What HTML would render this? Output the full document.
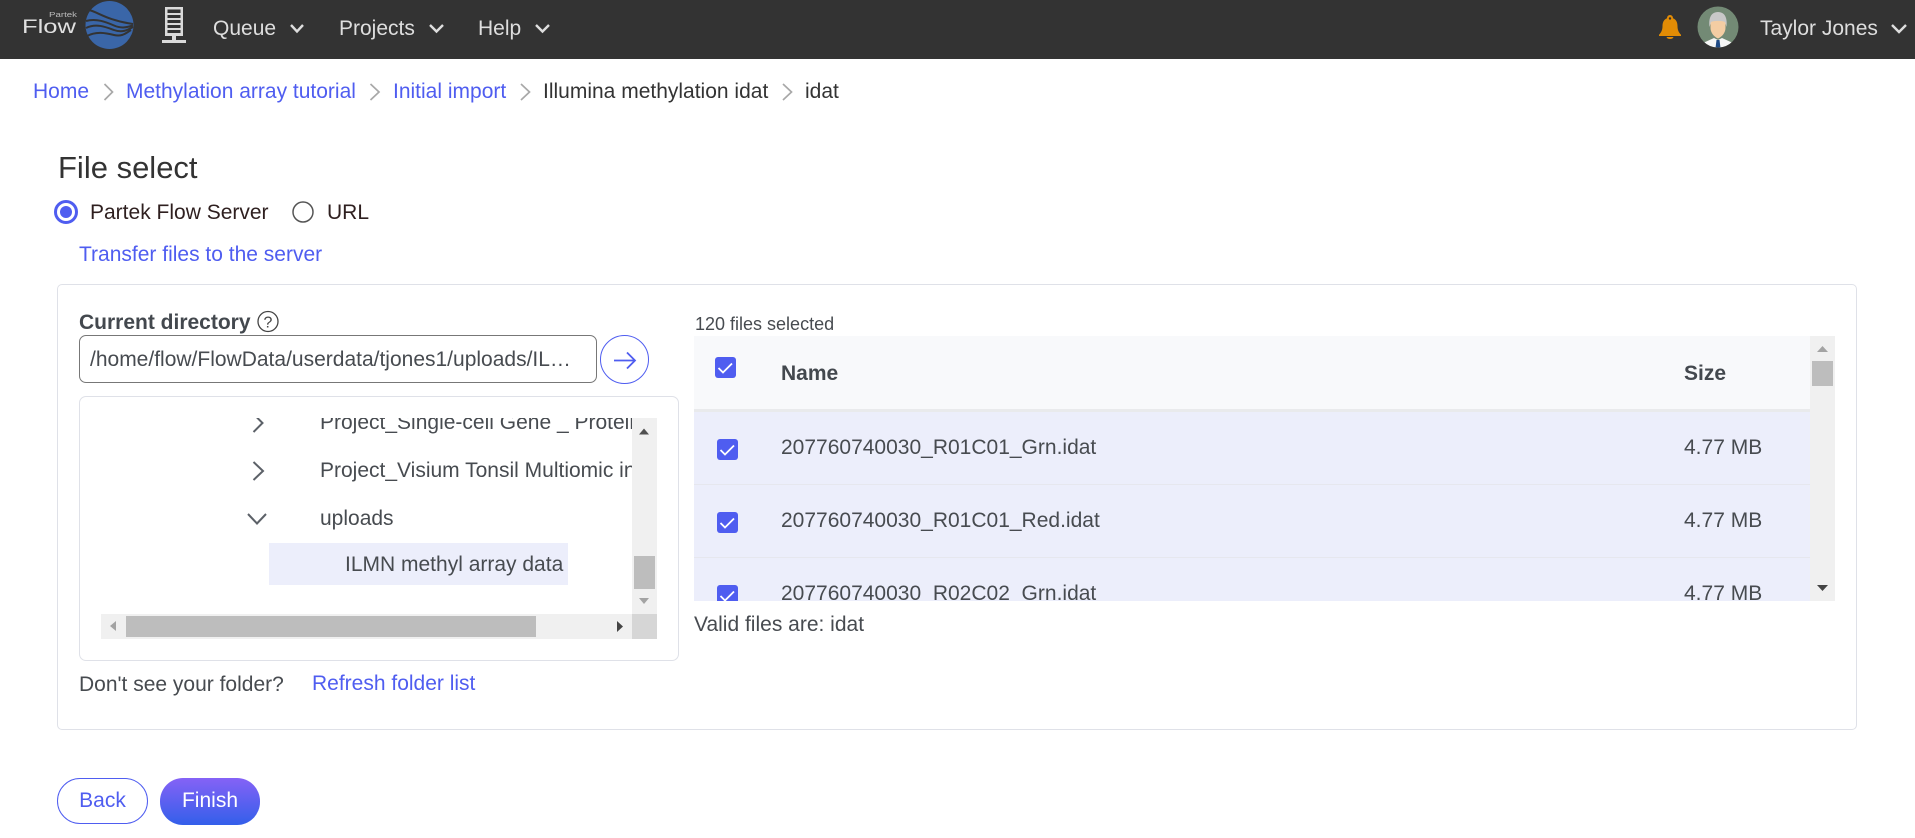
<!DOCTYPE html>
<html lang="en"><head><meta charset="utf-8"><title>File select</title>
<style>
html,body{margin:0;padding:0;background:#fff}
#p{position:relative;width:1915px;height:838px;overflow:hidden;background:#fff;font-family:"Liberation Sans",Arial,sans-serif;font-size:21px;color:#474b50}
.a{position:absolute}
.t{position:absolute;white-space:pre;line-height:26px;height:26px}
.l{color:#4f5df0}
.n{color:#dedede}
.d{color:#333}
.b{font-weight:bold;color:#43484e}
svg{position:absolute;left:0;top:0}
</style></head><body><div id="p">
<div class="a" style="left:0;top:0;width:1915px;height:59px;background:#333"></div>

<div class="a" style="left:57px;top:284px;width:1800px;height:446px;box-sizing:border-box;border:1px solid #dfe1e8;border-radius:5px"></div>
<div class="a" style="left:79px;top:335px;width:518px;height:48px;box-sizing:border-box;border:1px solid #777;border-radius:7px;background:#fff"></div>
<div class="a" style="left:600px;top:335px;width:49px;height:49px;box-sizing:border-box;border:1px solid #4f5df0;border-radius:50%"></div>
<div class="a" style="left:79px;top:396px;width:600px;height:265px;box-sizing:border-box;border:1px solid #dfe1e8;border-radius:7px"></div>

<!-- tree -->
<div class="a" style="left:269px;top:543px;width:299px;height:42px;background:#eceefb"></div>
<div class="a" style="left:101px;top:418px;width:531px;height:196px;overflow:hidden">
<div class="t" style="left:219px;top:-8px">Project_Single-cell Gene _ Protein expression</div>
<div class="t" style="left:219px;top:40px">Project_Visium Tonsil Multiomic integration</div>
<div class="t" style="left:219px;top:88px">uploads</div>
<div class="t" style="left:244px;top:134px">ILMN methyl array data</div>
</div>
<div class="a" style="left:632px;top:418px;width:25px;height:196px;background:#f0f0f0"></div>
<div class="a" style="left:634px;top:556px;width:21px;height:33px;background:#bdbdbd"></div>
<div class="a" style="left:101px;top:614px;width:531px;height:25px;background:#f0f0f0"></div>
<div class="a" style="left:126px;top:616px;width:410px;height:21px;background:#bdbdbd"></div>
<div class="a" style="left:632px;top:614px;width:25px;height:25px;background:#d6d6d6"></div>

<!-- table -->
<div class="a" style="left:694px;top:336px;width:1116px;height:73px;background:#f8f9fb"></div>
<div class="a" style="left:694px;top:409px;width:1116px;height:3px;background:#e9eaec"></div>
<div class="a" style="left:694px;top:412px;width:1116px;height:189px;background:#eceefb"></div>
<div class="a" style="left:694px;top:484px;width:1116px;height:1px;background:#e6e7ee"></div>
<div class="a" style="left:694px;top:557px;width:1116px;height:1px;background:#e6e7ee"></div>
<div class="a" style="left:1810px;top:336px;width:25px;height:265px;background:#f0f0f0"></div>
<div class="a" style="left:1812px;top:361px;width:21px;height:25px;background:#bdbdbd"></div>
<div class="a" style="left:715px;top:357px;width:21px;height:21px;background:#4f5df0;border-radius:3px"></div>
<div class="a" style="left:717px;top:439px;width:21px;height:21px;background:#4f5df0;border-radius:3px"></div>
<div class="a" style="left:717px;top:512px;width:21px;height:21px;background:#4f5df0;border-radius:3px"></div>
<div class="a" style="left:694px;top:585px;width:1116px;height:16px;overflow:hidden"><div class="a" style="left:23px;top:0;width:21px;height:21px;background:#4f5df0;border-radius:3px"></div></div>

<div class="t b" style="left:781px;top:361px">Name</div>
<div class="t b" style="left:1684px;top:361px">Size</div>
<div class="t" style="left:781px;top:435px">207760740030_R01C01_Grn.idat</div>
<div class="t" style="left:1684px;top:435px">4.77 MB</div>
<div class="t" style="left:781px;top:508px">207760740030_R01C01_Red.idat</div>
<div class="t" style="left:1684px;top:508px">4.77 MB</div>
<div class="a" style="left:694px;top:560px;width:1116px;height:41px;overflow:hidden">
<div class="t" style="left:87px;top:21px">207760740030_R02C02_Grn.idat</div>
<div class="t" style="left:990px;top:21px">4.77 MB</div>
</div>

<!-- nav text -->
<div class="t n" style="left:213px;top:16px">Queue</div>
<div class="t n" style="left:339px;top:16px">Projects</div>
<div class="t n" style="left:478px;top:16px">Help</div>
<div class="t n" style="left:1760px;top:16px">Taylor Jones</div>

<!-- breadcrumb -->
<div class="t l" style="left:33px;top:79px">Home</div>
<div class="t l" style="left:126px;top:79px">Methylation array tutorial</div>
<div class="t l" style="left:393px;top:79px">Initial import</div>
<div class="t d" style="left:543px;top:79px">Illumina methylation idat</div>
<div class="t d" style="left:805px;top:79px">idat</div>

<div class="t d" style="left:58px;top:151px;font-size:31px;height:34px;line-height:34px">File select</div>
<div class="t" style="left:90px;top:200px;color:#2e1f1f">Partek Flow Server</div>
<div class="t" style="left:327px;top:200px;color:#2e1f1f">URL</div>
<div class="t l" style="left:79px;top:242px">Transfer files to the server</div>

<div class="t b" style="left:79px;top:310px">Current directory</div>
<div class="t" style="left:90px;top:347px">/home/flow/FlowData/userdata/tjones1/uploads/IL…</div>
<div class="t" style="left:695px;top:313px;font-size:18px;line-height:22px;height:22px">120 files selected</div>
<div class="t" style="left:694px;top:612px">Valid files are: idat</div>
<div class="t" style="left:79px;top:672px">Don't see your folder?</div>
<div class="t l" style="left:312px;top:671px">Refresh folder list</div>

<!-- buttons -->
<div class="a l" style="left:57px;top:778px;width:91px;height:46px;box-sizing:border-box;border:1px solid #4f5df0;border-radius:23px;text-align:center;line-height:44px">Back</div>
<div class="a" style="left:160px;top:778px;width:100px;height:47px;border-radius:23px;background:linear-gradient(#8562f6,#335fea);color:#fff;text-align:center;line-height:46px">Finish</div>

<svg width="1915" height="838" viewBox="0 0 1915 838" fill="none">
<!-- logo -->
<text x="22" y="33" font-family="Liberation Sans" font-size="19" fill="#e0e0e0" textLength="54" lengthAdjust="spacingAndGlyphs">Flow</text>
<text x="49" y="17" font-family="Liberation Sans" font-size="7" fill="#bdbdbd" textLength="28" lengthAdjust="spacingAndGlyphs">Partek</text>
<circle cx="109.500" cy="25" r="24" fill="#3a66a8"/>
<g stroke="#333" fill="none" stroke-width="2">
<path d="M89 10C98 12 106 20 133 24"/>
<path d="M86 21C96 18 106 22 114 25.500S128 27 133 25.500"/>
<path d="M86 28C96 23 106 27 114 30S128 30 133 27"/>
<path d="M87 36C96 31 106 33 114 35S126 33 131 30"/>
</g>
<!-- server -->
<rect x="165" y="7" width="18" height="29" fill="#dadada"/>
<g fill="#333"><rect x="167.500" y="9.500" width="13" height="3.500"/><rect x="167.500" y="15" width="13" height="3"/><rect x="167.500" y="20" width="13" height="3"/><rect x="167.500" y="25" width="13" height="3"/><rect x="167.500" y="30" width="13" height="3"/></g>
<rect x="172" y="36" width="4" height="5" fill="#dadada"/>
<rect x="162" y="40" width="24" height="3" fill="#dadada"/>
<!-- nav chevrons -->
<g stroke="#dedede" stroke-width="2.400">
<path d="M291 25l6 6.500 6-6.500"/><path d="M430 25l6.500 6.500 6.500-6.500"/><path d="M536 25l6.500 6.500 6.500-6.500"/><path d="M1892 25l7 7 7-7"/>
</g>
<!-- bell -->
<path d="M1670 15a3 3 0 0 1 3 3.300c3.500 1.500 4.500 4.500 4.500 8 0 4 1.500 6.500 3.500 8.500v1.200h-22v-1.200c2-2 3.500-4.500 3.500-8.500 0-3.500 1-6.500 4.500-8a3 3 0 0 1 3-3.300z" fill="#e28c05"/>
<circle cx="1670" cy="18.500" r="1.200" fill="#333"/>
<path d="M1666.500 37h7c-.5 1.500-2 2-3.500 2s-3-.5-3.500-2z" fill="#e28c05"/>
<!-- avatar -->
<clipPath id="av"><circle cx="1718" cy="27" r="20.500"/></clipPath>
<circle cx="1718" cy="27" r="20.500" fill="#738a75"/>
<g clip-path="url(#av)">
<path d="M1703 43l11-5 4 2 4-2 11 5v6h-30z" fill="#f6f6f6"/>
<path d="M1716.500 40h3l1 8h-5z" fill="#1f4a85"/>
<path d="M1710.500 20h15v8c0 5-4 9-7.500 10.500-3.500-1.500-7.500-5.500-7.500-10.500z" fill="#f4cda3"/>
<path d="M1709.500 27c-1-8 1-15 8.500-15s9.500 7 8.500 15l-1.500-5c-3-1.500-11-1.500-14 0z" fill="#c8c8c8"/>
</g>
<!-- breadcrumb chevrons -->
<g stroke="#a8a8a8" stroke-width="1.700">
<path d="M104.500 84l8 8-8 8"/><path d="M370.500 84l8.500 8-8.500 8"/><path d="M521 84l8.500 8-8.500 8"/><path d="M783 84l8.500 8-8.500 8"/>
</g>
<!-- radios -->
<circle cx="66" cy="212" r="10.500" stroke="#4f5df0" stroke-width="3" fill="#fff"/>
<circle cx="66" cy="212" r="6" fill="#4f5df0"/>
<circle cx="303" cy="212" r="10" stroke="#555" stroke-width="1.500" fill="#fff"/>
<!-- help -->
<circle cx="268" cy="321.500" r="10" stroke="#444" stroke-width="1.300"/>
<text x="268" y="327.500" font-family="Liberation Sans" font-size="16" fill="#444" text-anchor="middle">?</text>
<!-- arrow -->
<path d="M614 360.500h21M627 352.500l8 8-8 8" stroke="#4f5df0" stroke-width="1.800"/>
<!-- tree chevrons -->
<clipPath id="tc"><rect x="240" y="418" width="40" height="120"/></clipPath>
<g stroke="#5c6168" stroke-width="2" clip-path="url(#tc)">
<path d="M253.500 414l9 9-9 9"/>
<path d="M253.500 462l9.500 9-9.500 9"/>
<path d="M248 514l9 9.500 9-9.500"/>
</g>
<!-- scroll arrows -->
<path d="M639 434.500l5-6 5 6z" fill="#505050"/>
<path d="M639 598l5 6 5-6z" fill="#a3a3a3"/>
<path d="M116 621v10l-6-5z" fill="#a3a3a3"/>
<path d="M617 621v11l6-5.500z" fill="#444"/>
<path d="M1817 352l5.500-6 5.500 6z" fill="#a3a3a3"/>
<path d="M1817 585l5.500 6 5.500-6z" fill="#444"/>
<!-- checks -->
<g stroke="#fff" stroke-width="1.800">
<path d="M718.500 368l4.500 4.500 9-9"/>
<path d="M720.500 450l4.500 4.500 9-9"/>
<path d="M720.500 523l4.500 4.500 9-9"/>
</g>
<clipPath id="c3"><rect x="700" y="585" width="60" height="16"/></clipPath>
<path clip-path="url(#c3)" d="M720.500 596l4.500 4.500 9-9" stroke="#fff" stroke-width="1.800"/>
</svg>
</div></body></html>
